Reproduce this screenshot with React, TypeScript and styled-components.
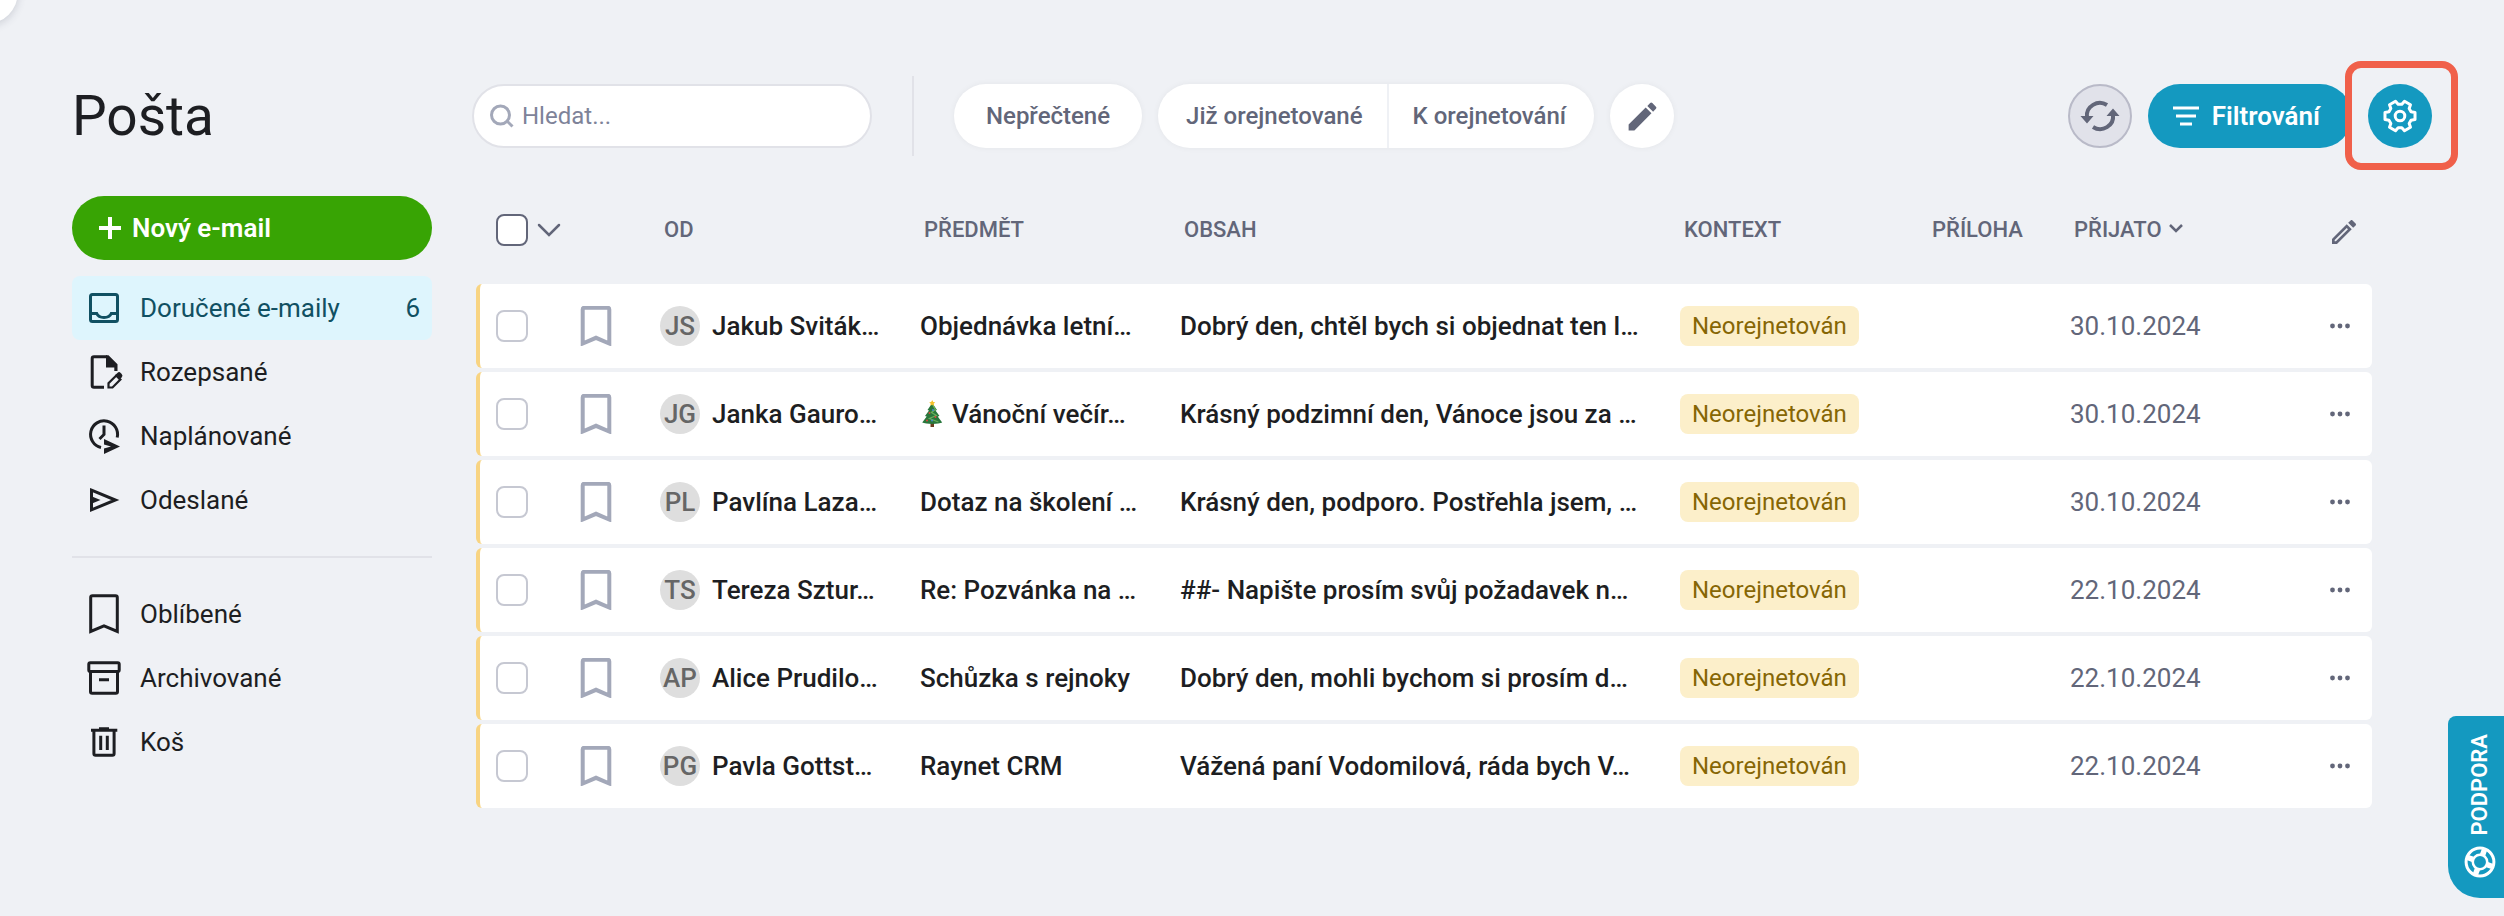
import React from "react";
import styled, { createGlobalStyle, css } from "styled-components";

const color = {
  page: "#eff1f5",
  ink: "#1d1e22",
  muted: "#626679",
  faint: "#a3a8b9",
  line: "#e1e2e8",
  teal: "#1499c0",
  tealDark: "#115062",
  tealLight: "#def5fd",
  green: "#38a404",
  amber: "#f8d482",
  coral: "#f0604a",
};

const GlobalStyle = createGlobalStyle`
  *, *::before, *::after { box-sizing: border-box; }
  body {
    margin: 0;
    background: ${color.page};
    color: ${color.ink};
    font-family: Roboto, "Liberation Sans", sans-serif;
    font-size: 26px;
    line-height: 32px;
  }
  button, input { font: inherit; color: inherit; }
  button { border: 0; padding: 0; background: none; cursor: pointer; }
  svg { display: block; flex: none; }
`;

const Page = styled.div`
  display: flex;
  gap: 40px;
  min-height: 100vh;
  padding: 76px 72px 40px;
`;

const CornerButton = styled.button`
  position: fixed;
  top: -40px;
  left: -46px;
  width: 64px;
  height: 64px;
  border-radius: 50%;
  background: #fff;
  box-shadow: 0 2px 8px rgba(60, 64, 90, 0.2);
`;

const Sidebar = styled.aside`
  flex: none;
  width: 360px;
`;

const Title = styled.h1`
  margin: 0 0 40px;
  font-size: 55px;
  font-weight: 400;
  line-height: 80px;
`;

const NewMailButton = styled.button`
  display: flex;
  align-items: center;
  gap: 10px;
  width: 100%;
  height: 64px;
  margin-bottom: 16px;
  padding: 0 26px;
  border-radius: 32px;
  background: ${color.green};
  color: #fff;
  font-weight: 600;
`;

const FolderList = styled.ul`
  margin: 0;
  padding: 0;
  list-style: none;

  & + & {
    margin-top: 24px;
    padding-top: 24px;
    border-top: 2px solid ${color.line};
  }
`;

const FolderLink = styled.a<{ $active?: boolean }>`
  display: flex;
  align-items: center;
  gap: 16px;
  height: 64px;
  padding: 0 12px;
  border-radius: 8px;
  color: inherit;
  text-decoration: none;
  ${(p) =>
    p.$active &&
    css`
      background: ${color.tealLight};
      color: ${color.tealDark};
    `}
`;

const FolderCount = styled.span`
  margin-left: auto;
`;

const Main = styled.main`
  flex: 1;
  min-width: 0;
`;

const Toolbar = styled.div`
  display: flex;
  align-items: center;
  height: 80px;
  margin-bottom: 20px;
`;

const SearchBox = styled.label`
  display: flex;
  align-items: center;
  gap: 8px;
  width: 400px;
  height: 64px;
  padding: 0 16px;
  border: 2px solid ${color.line};
  border-radius: 32px;
  background: #fff;
`;

const SearchInput = styled.input`
  flex: 1;
  min-width: 0;
  padding: 0;
  border: 0;
  outline: 0;
  background: none;
  font-size: 24px;
  &::placeholder {
    color: #7e8399;
    opacity: 1;
  }
`;

const ToolbarDivider = styled.div`
  align-self: stretch;
  width: 2px;
  margin: 0 40px;
  background: ${color.line};
`;

const PillGroup = styled.div`
  display: flex;
  gap: 16px;
`;

const Pill = styled.div`
  display: flex;
  height: 64px;
  border-radius: 32px;
  background: #fff;
  box-shadow: 0 0 6px rgba(0, 0, 0, 0.05);
`;

const PillButton = styled.button<{ $side?: "left" | "right" }>`
  display: flex;
  align-items: center;
  justify-content: center;
  min-width: 64px;
  padding: ${(p) =>
    p.$side === "left" ? "0 24px 0 28px" : p.$side === "right" ? "0 28px 0 24px" : "0 32px"};
  border-right: ${(p) => (p.$side === "left" ? `2px solid ${color.page}` : "0")};
  color: ${color.muted};
  font-size: 24px;
  font-weight: 500;
  white-space: nowrap;
`;

const PillIconButton = styled(PillButton)`
  padding: 0;
`;

const Actions = styled.div`
  display: flex;
  gap: 16px;
  margin-left: auto;
`;

const RoundButton = styled.button<{ $primary?: boolean }>`
  display: grid;
  place-items: center;
  width: 64px;
  height: 64px;
  border: ${(p) => (p.$primary ? "0" : "2px solid #b9bac8")};
  border-radius: 50%;
  background: ${(p) => (p.$primary ? color.teal : "#e1e2ea")};
  color: ${(p) => (p.$primary ? "#fff" : color.muted)};
`;

const FilterButton = styled.button`
  display: flex;
  align-items: center;
  gap: 12px;
  height: 64px;
  padding: 0 32px 0 24px;
  border-radius: 32px;
  background: ${color.teal};
  color: #fff;
  font-weight: 600;
`;

const Highlighted = styled.div`
  position: relative;

  &::after {
    content: "";
    position: absolute;
    inset: -23px -26px -22px -23px;
    border: 7px solid ${color.coral};
    border-radius: 16px;
    pointer-events: none;
  }
`;

const TableWrap = styled.div`
  padding: 0 60px 0 4px;
`;

const MailTable = styled.table`
  width: 100%;
  table-layout: fixed;
  border-collapse: separate;
  border-spacing: 0 4px;
`;

const Col = styled.col<{ $w?: number }>`
  width: ${(p) => (p.$w ? `${p.$w}px` : "auto")};
`;

const HeadCell = styled.th`
  height: 100px;
  padding: 0 0 0 20px;
  color: ${color.muted};
  font-size: 22px;
  font-weight: 500;
  text-align: left;
  white-space: nowrap;

  &:last-child {
    padding: 4px 12px 0 0;
  }
`;

const Inline = styled.div`
  display: flex;
  align-items: center;
  gap: 5px;
`;

const SortButton = styled.button`
  display: flex;
  align-items: center;
  gap: 6px;
`;

const IconButton = styled.button<{ $faint?: boolean; $end?: boolean }>`
  display: grid;
  place-items: center;
  min-width: 32px;
  min-height: 32px;
  margin-left: ${(p) => (p.$end ? "auto" : "0")};
  color: ${(p) => (p.$faint ? color.faint : color.muted)};
`;

const Cell = styled.td`
  height: 84px;
  padding: 0 0 0 16px;
  background: #fff;
  white-space: nowrap;

  &:first-child {
    border-left: 4px solid ${color.amber};
    border-radius: 6px 0 0 6px;
  }
  &:last-child {
    padding: 0 16px 0 0;
    border-radius: 0 6px 6px 0;
  }
`;

const StrongCell = styled(Cell)`
  font-weight: 500;
`;

const DateCell = styled(Cell)`
  color: ${color.muted};
`;

const Tick = styled.input<{ $dark?: boolean }>`
  display: block;
  appearance: none;
  width: 32px;
  height: 32px;
  margin: 0;
  border: 2px solid ${(p) => (p.$dark ? color.muted : "#c6c8d2")};
  border-radius: 8px;
  background: #fff;
`;

const Sender = styled.div`
  display: flex;
  align-items: center;
  gap: 12px;
`;

const Avatar = styled.span`
  display: flex;
  align-items: center;
  justify-content: center;
  flex: none;
  width: 40px;
  height: 40px;
  border-radius: 50%;
  background: #dedede;
  color: #666;
`;

const Badge = styled.span`
  display: inline-block;
  height: 40px;
  padding: 0 12px;
  border-radius: 8px;
  background: #fcefca;
  color: #866604;
  font-size: 24px;
  line-height: 40px;
  vertical-align: middle;
`;

const SupportTab = styled.button`
  position: fixed;
  right: 0;
  bottom: 18px;
  display: flex;
  flex-direction: column;
  align-items: center;
  justify-content: space-between;
  width: 56px;
  height: 182px;
  padding: 18px 0 20px 8px;
  border-radius: 8px 0 0 32px;
  background: ${color.teal};
  color: #fff;
  font-size: 22px;
  font-weight: 600;
`;

const VerticalText = styled.span`
  writing-mode: vertical-rl;
  transform: rotate(180deg);
  line-height: 28px;
`;

const line = { fill: "none", stroke: "currentColor", strokeWidth: 3 } as const;

const NavSvg = ({ children }: { children: React.ReactNode }) => (
  <svg width="40" height="40" viewBox="0 0 40 40" aria-hidden="true" {...line}>
    {children}
  </svg>
);

const InboxIcon = () => (
  <NavSvg>
    <rect x="6.5" y="6.5" width="27" height="27" rx="2" />
    <path d="M6.5 25.5h6.2c1 2.3 3.8 4 7.3 4s6.3-1.7 7.3-4h6.2" />
  </NavSvg>
);

const DraftIcon = () => (
  <NavSvg>
    <path d="M20 35.2H10a1.8 1.8 0 0 1-1.8-1.8V6.5A1.8 1.8 0 0 1 10 4.7h13" />
    <path d="M22 3.2h2.5l9 9V19h-3.2v-3.5H22z" fill="currentColor" stroke="none" />
    <path d="M24.5 35.5v-4.2l7.8-7.8 4.1 4.1-7.9 7.9z" strokeWidth="2.2" />
    <path d="M31 23.3l2.4-2.4a2.4 2.4 0 0 1 3.3 0l1 1a2.4 2.4 0 0 1 0 3.3l-2.5 2.5z" fill="currentColor" stroke="none" />
  </NavSvg>
);

const ScheduledIcon = () => (
  <NavSvg>
    <path d="M33.2 21.5A13.5 13.5 0 1 0 17 31.5" />
    <path d="M20 9.5v9l-4.5 4.5" />
    <path d="M20 23l16 7.5L20 38v-5.5l7-2-7-2z" fill="currentColor" stroke="none" />
  </NavSvg>
);

const SentIcon = () => (
  <NavSvg>
    <path d="M7.5 10.2L31.4 20 7.5 29.8z" />
    <path d="M8 16.5l8.5 3.5L8 23.5z" fill="currentColor" stroke="none" />
  </NavSvg>
);

const BookmarkIcon = ({ weight = 3 }: { weight?: number }) => (
  <svg width="40" height="40" viewBox="0 0 40 40" aria-hidden="true" {...line} strokeWidth={weight}>
    <path d="M6.7 37.5V3.5a1.8 1.8 0 0 1 1.8-1.8h23a1.8 1.8 0 0 1 1.8 1.8v34L20 31.8z" />
  </svg>
);

const ArchiveIcon = () => (
  <NavSvg>
    <rect x="4.8" y="4.8" width="30.4" height="8.6" rx="1.5" />
    <path d="M6.5 13v20.5a1.7 1.7 0 0 0 1.7 1.7h23.6a1.7 1.7 0 0 0 1.7-1.7V13M15 21.7h10" />
  </NavSvg>
);

const TrashIcon = () => (
  <NavSvg>
    <path d="M7 8.2h26.3M15 6.7h10M9.9 8v23.5a1.7 1.7 0 0 0 1.7 1.7h16.8a1.7 1.7 0 0 0 1.7-1.7V8M16.7 13.7V28M23.3 13.7V28" />
  </NavSvg>
);

const PlusIcon = () => (
  <svg width="24" height="24" viewBox="0 0 24 24" aria-hidden="true" {...line} strokeWidth="4">
    <path d="M12 1v22M1 12h22" />
  </svg>
);

const SearchIcon = () => (
  <svg width="24" height="24" viewBox="0 0 24 24" aria-hidden="true" {...line} stroke={color.faint}>
    <circle cx="10.5" cy="11" r="9" />
    <path d="M16.5 16.5l6 6" />
  </svg>
);

const PencilSolidIcon = () => (
  <svg width="37" height="37" viewBox="0 0 24 24" fill="currentColor" aria-hidden="true">
    <path d="M3 17.25V21h3.75L17.81 9.94l-3.75-3.75L3 17.25zM20.71 7.04a1 1 0 0 0 0-1.41l-2.34-2.34a1 1 0 0 0-1.41 0l-1.83 1.83 3.75 3.75 1.83-1.83z" />
  </svg>
);

const PencilIcon = () => (
  <svg width="32" height="32" viewBox="0 0 24 24" fill="currentColor" aria-hidden="true">
    <path d="M14.06 9.02l.92.92L5.92 19H5v-.92l9.06-9.06M17.66 3c-.25 0-.51.1-.7.29l-1.83 1.83 3.75 3.75 1.83-1.83a1 1 0 0 0 0-1.41l-2.34-2.34c-.2-.2-.45-.29-.71-.29m-3.6 3.19L3 17.25V21h3.75L17.81 9.94z" />
  </svg>
);

const RefreshIcon = () => (
  <svg width="40" height="40" viewBox="-20 -20 40 40" aria-hidden="true" {...line} strokeWidth="4">
    <path d="M7 -11A13 12.5 0 0 0 -13 1M-7 11A13 12.5 0 0 0 13 -1" />
    <path d="M-19.5 0h13l-6.5 7.5zM19.5 0h-13l6.5 -7.5z" fill="currentColor" stroke="none" />
  </svg>
);

const FilterIcon = () => (
  <svg width="28" height="24" viewBox="0 0 28 24" aria-hidden="true" {...line}>
    <path d="M1 4h26M4 12h20M8 20h12" />
  </svg>
);

const gearOutline = Array.from({ length: 6 }, (_, i) => i * 60)
  .flatMap((deg) => [
    [deg - 21, 11.8],
    [deg - 13, 15.4],
    [deg + 13, 15.4],
    [deg + 21, 11.8],
  ])
  .map(([deg, r]) => {
    const a = (deg * Math.PI) / 180;
    return `${(Math.cos(a) * r).toFixed(2)},${(Math.sin(a) * r).toFixed(2)}`;
  })
  .join(" ");

const GearIcon = () => (
  <svg width="36" height="36" viewBox="-18 -18 36 36" aria-hidden="true" {...line} strokeLinejoin="round">
    <polygon points={gearOutline} />
    <circle r="4.8" />
  </svg>
);

const ChevronIcon = ({ wide }: { wide?: boolean }) =>
  wide ? (
    <svg width="26" height="16" viewBox="0 0 26 16" aria-hidden="true" {...line} strokeWidth="2.5" strokeLinecap="round">
      <path d="M3 3l10 10L23 3" />
    </svg>
  ) : (
    <svg width="16" height="16" viewBox="0 0 16 16" aria-hidden="true" {...line} strokeWidth="2.5">
      <path d="M2 3l6 6 6-6" />
    </svg>
  );

const DotsIcon = () => (
  <svg width="20" height="6" viewBox="0 0 20 6" fill="currentColor" aria-hidden="true">
    <circle cx="2.5" cy="3" r="2.4" />
    <circle cx="10" cy="3" r="2.4" />
    <circle cx="17.5" cy="3" r="2.4" />
  </svg>
);

const LifebuoyIcon = () => (
  <svg width="32" height="32" viewBox="-16 -16 32 32" aria-hidden="true" {...line}>
    <circle r="13.9" />
    <circle r="7.2" strokeWidth="2.5" />
    {[20, 110, 200, 290].map((deg) => (
      <path key={deg} d="M7.5 0H14" strokeWidth="5.5" transform={`rotate(${deg})`} />
    ))}
  </svg>
);

const TreeSvg = styled.svg`
  display: inline-block;
  margin-right: 8px;
  vertical-align: -4px;
`;

const TreeIcon = () => (
  <TreeSvg width="24" height="27" viewBox="0 0 24 27" role="img" aria-label="Vánoční stromek">
    <path d="M10.5 22h3.5v5h-3.5z" fill="#6b3d1e" />
    <path d="M12.2 3l4.8 7-1.5.5 4 5.5-1.8.6 4.5 6c-3 1.8-16.5 1.8-20 0l4.5-6-1.7-.6 4-5.5L7.5 10z" fill="#28773c" />
    <path d="M12.2 4l3.2 5.5-4 3 5 3-7 3 9 3.5" fill="none" stroke="#6bb05c" strokeWidth="1.2" />
    <path d="M12.2 0l1 2 2 .3-1.5 1.4.4 2.1-1.9-1-1.9 1 .4-2.1L9.2 2.3l2-.3z" fill="#f4c22c" />
    <g fill="#d9463c">
      <circle cx="9.5" cy="13" r="1" />
      <circle cx="15.5" cy="17" r="1" />
      <circle cx="7" cy="20.5" r="1" />
    </g>
    <g fill="#4c86d9">
      <circle cx="13" cy="10" r="0.9" />
      <circle cx="12" cy="20.5" r="0.9" />
    </g>
  </TreeSvg>
);

const folders = [
  { label: "Doručené e-maily", Icon: InboxIcon, count: 6, active: true },
  { label: "Rozepsané", Icon: DraftIcon },
  { label: "Naplánované", Icon: ScheduledIcon },
  { label: "Odeslané", Icon: SentIcon },
];

const storage = [
  { label: "Oblíbené", Icon: BookmarkIcon },
  { label: "Archivované", Icon: ArchiveIcon },
  { label: "Koš", Icon: TrashIcon },
];

const mails = [
  { initials: "JS", from: "Jakub Sviták…", subject: "Objednávka letní…", body: "Dobrý den, chtěl bych si objednat ten l…", date: "30.10.2024" },
  { initials: "JG", from: "Janka Gauro…", subject: "Vánoční večír…", tree: true, body: "Krásný podzimní den, Vánoce jsou za …", date: "30.10.2024" },
  { initials: "PL", from: "Pavlína Laza…", subject: "Dotaz na školení …", body: "Krásný den, podporo. Postřehla jsem, …", date: "30.10.2024" },
  { initials: "TS", from: "Tereza Sztur…", subject: "Re: Pozvánka na …", body: "##- Napište prosím svůj požadavek n…", date: "22.10.2024" },
  { initials: "AP", from: "Alice Prudilo…", subject: "Schůzka s rejnoky", body: "Dobrý den, mohli bychom si prosím d…", date: "22.10.2024" },
  { initials: "PG", from: "Pavla Gottst…", subject: "Raynet CRM", body: "Vážená paní Vodomilová, ráda bych V…", date: "22.10.2024" },
];

type Folder = { label: string; Icon: React.ComponentType; count?: number; active?: boolean };

const Folders = ({ items }: { items: Folder[] }) => (
  <FolderList>
    {items.map(({ label, Icon, count, active }) => (
      <li key={label}>
        <FolderLink href="#" $active={active} aria-current={active ? "page" : undefined}>
          <Icon />
          {label}
          {count !== undefined && <FolderCount>{count}</FolderCount>}
        </FolderLink>
      </li>
    ))}
  </FolderList>
);

export default function App() {
  return (
    <>
      <GlobalStyle />
      <Page>
        <CornerButton aria-label="Menu" />
        <Sidebar>
          <Title>Pošta</Title>
          <NewMailButton>
            <PlusIcon />
            Nový e-mail
          </NewMailButton>
          <nav>
            <Folders items={folders} />
            <Folders items={storage} />
          </nav>
        </Sidebar>
        <Main>
          <Toolbar>
            <SearchBox>
              <SearchIcon />
              <SearchInput type="text" placeholder="Hledat..." aria-label="Hledat" />
            </SearchBox>
            <ToolbarDivider />
            <PillGroup>
              <Pill>
                <PillButton>Nepřečtené</PillButton>
              </Pill>
              <Pill>
                <PillButton $side="left">Již orejnetované</PillButton>
                <PillButton $side="right">K orejnetování</PillButton>
              </Pill>
              <Pill>
                <PillIconButton aria-label="Upravit filtry">
                  <PencilSolidIcon />
                </PillIconButton>
              </Pill>
            </PillGroup>
            <Actions>
              <RoundButton aria-label="Obnovit">
                <RefreshIcon />
              </RoundButton>
              <FilterButton>
                <FilterIcon />
                Filtrování
              </FilterButton>
              <Highlighted>
                <RoundButton $primary aria-label="Nastavení">
                  <GearIcon />
                </RoundButton>
              </Highlighted>
            </Actions>
          </Toolbar>
          <TableWrap>
            <MailTable>
              <colgroup>
                <Col $w={84} />
                <Col $w={84} />
                <Col $w={260} />
                <Col $w={260} />
                <Col />
                <Col $w={248} />
                <Col $w={142} />
                <Col $w={246} />
                <Col $w={72} />
              </colgroup>
              <thead>
                <tr>
                  <HeadCell colSpan={2}>
                    <Inline>
                      <Tick type="checkbox" $dark aria-label="Vybrat vše" />
                      <IconButton aria-label="Možnosti výběru">
                        <ChevronIcon wide />
                      </IconButton>
                    </Inline>
                  </HeadCell>
                  <HeadCell>OD</HeadCell>
                  <HeadCell>PŘEDMĚT</HeadCell>
                  <HeadCell>OBSAH</HeadCell>
                  <HeadCell>KONTEXT</HeadCell>
                  <HeadCell>PŘÍLOHA</HeadCell>
                  <HeadCell>
                    <SortButton>
                      PŘIJATO
                      <ChevronIcon />
                    </SortButton>
                  </HeadCell>
                  <HeadCell>
                    <IconButton $end aria-label="Upravit sloupce">
                      <PencilIcon />
                    </IconButton>
                  </HeadCell>
                </tr>
              </thead>
              <tbody>
                {mails.map((m) => (
                  <tr key={m.initials}>
                    <Cell>
                      <Tick type="checkbox" aria-label={`Vybrat ${m.subject}`} />
                    </Cell>
                    <Cell>
                      <IconButton $faint aria-label="Oblíbené">
                        <BookmarkIcon weight={4} />
                      </IconButton>
                    </Cell>
                    <StrongCell>
                      <Sender>
                        <Avatar>{m.initials}</Avatar>
                        {m.from}
                      </Sender>
                    </StrongCell>
                    <StrongCell>
                      {m.tree && <TreeIcon />}
                      {m.subject}
                    </StrongCell>
                    <StrongCell>{m.body}</StrongCell>
                    <Cell>
                      <Badge>Neorejnetován</Badge>
                    </Cell>
                    <Cell />
                    <DateCell>{m.date}</DateCell>
                    <Cell>
                      <IconButton $end aria-label="Další akce">
                        <DotsIcon />
                      </IconButton>
                    </Cell>
                  </tr>
                ))}
              </tbody>
            </MailTable>
          </TableWrap>
        </Main>
        <SupportTab>
          <VerticalText>PODPORA</VerticalText>
          <LifebuoyIcon />
        </SupportTab>
      </Page>
    </>
  );
}
